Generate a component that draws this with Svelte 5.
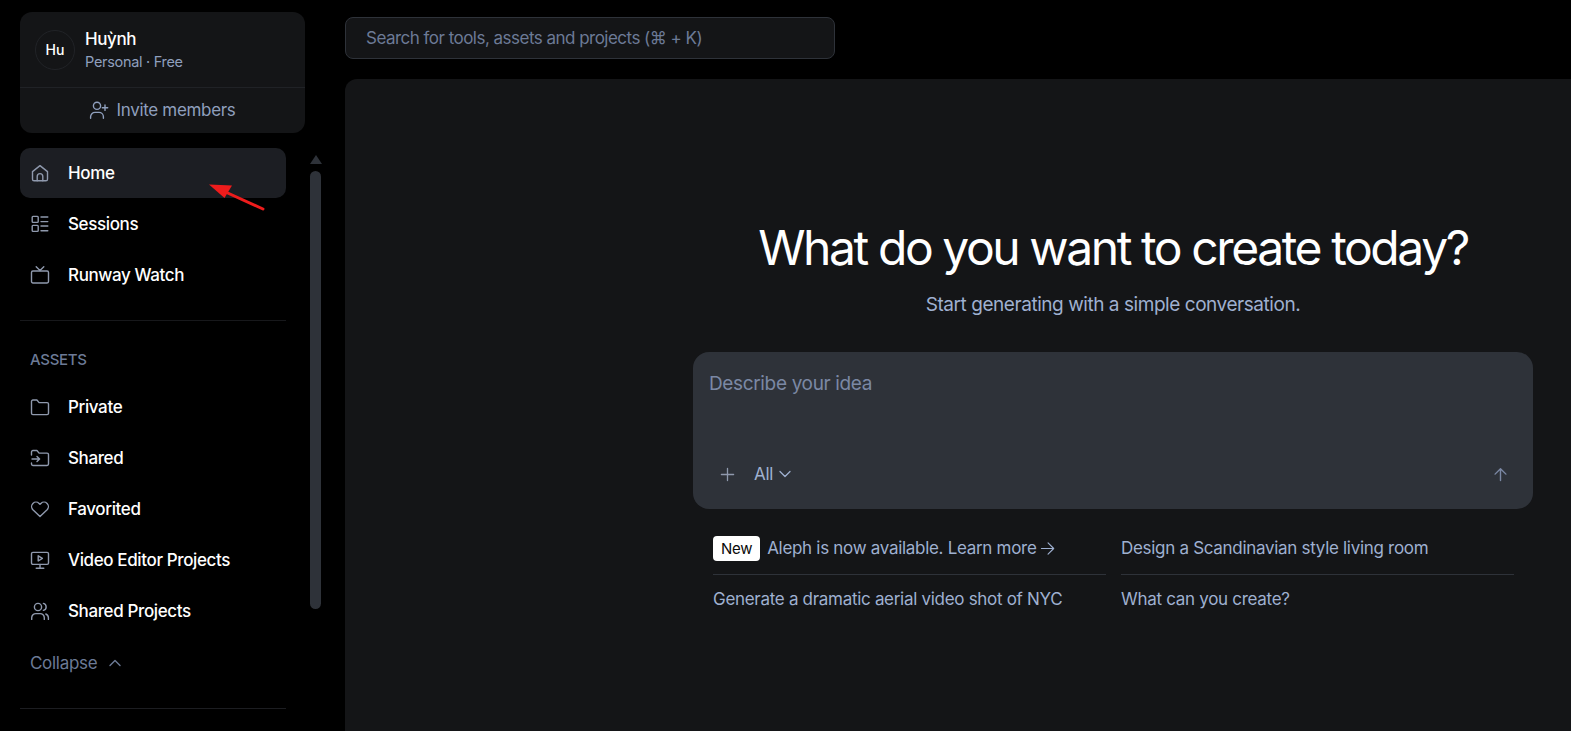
<script>
  const topNav = [
    { label: 'Home', icon: 'home', active: true },
    { label: 'Sessions', icon: 'sessions' },
    { label: 'Runway Watch', icon: 'tv' }
  ];
  const assets = [
    { label: 'Private', icon: 'folder' },
    { label: 'Shared', icon: 'shared' },
    { label: 'Favorited', icon: 'heart' },
    { label: 'Video Editor Projects', icon: 'video' },
    { label: 'Shared Projects', icon: 'users' }
  ];
</script>

{#snippet navIcon(name)}
  <svg class="nav-icon" viewBox="0 0 20 20" fill="none" stroke="currentColor" stroke-width="1.4" stroke-linecap="round" stroke-linejoin="round">
    {#if name === 'home'}
      <path d="M2.500 8.600 10 2.600l7.500 6v7.600a1.600 1.600 0 0 1-1.600 1.600H4.100a1.600 1.600 0 0 1-1.600-1.600z" />
      <path d="M7.200 17.800v-4.400a2.800 2.800 0 0 1 5.600 0v4.400" />
    {:else if name === 'sessions'}
      <rect x="2.200" y="2.400" width="6" height="6" rx="0.8" />
      <rect x="2.200" y="11.400" width="6" height="6" rx="0.8" />
      <path d="M11 3h6.800M11 7.600h6.800M11 12h6.800M11 16.800h6.800" />
    {:else if name === 'tv'}
      <rect x="1.500" y="6" width="17" height="12" rx="1.400" />
      <path d="M6.200 1.800 10 5.600l3.800-3.800" />
    {:else if name === 'folder'}
      <path d="M1.500 4.400a1.400 1.400 0 0 1 1.400-1.400h4l2.200 2.600h8a1.400 1.400 0 0 1 1.400 1.400v9.200a1.400 1.400 0 0 1-1.400 1.400H2.900a1.400 1.400 0 0 1-1.400-1.400z" />
    {:else if name === 'shared'}
      <path d="M1.500 7V3.900a1.400 1.400 0 0 1 1.400-1.400h4l2.200 2.600h8a1.400 1.400 0 0 1 1.400 1.400v9.600a1.400 1.400 0 0 1-1.400 1.400H2.900a1.400 1.400 0 0 1-1.400-1.400V15" />
      <path d="M2 11h7.400M7 8.400l2.600 2.600L7 13.600" />
    {:else if name === 'heart'}
      <path d="M10 17.600 2.900 10.700a4.500 4.500 0 0 1 0-6.300 4.400 4.400 0 0 1 6.200 0l.9.9.9-.9a4.400 4.400 0 0 1 6.200 0 4.500 4.500 0 0 1 0 6.300z" />
    {:else if name === 'video'}
      <rect x="1.500" y="2.400" width="17" height="12" rx="1.400" />
      <path d="M10 14.400v3.600M6.200 18.200h7.600" />
      <path d="M8.200 5.800l4.200 2.600-4.200 2.600z" />
    {:else}
      <circle cx="8" cy="6" r="3.600" />
      <path d="M1.700 18.400v-1.600a4.200 4.200 0 0 1 4.200-4.200h4.200a4.200 4.200 0 0 1 4.200 4.200v1.600" />
      <path d="M13.400 2.400a3.600 3.600 0 0 1 0 7M18.400 18.400v-1.600a4.200 4.200 0 0 0-2.600-3.800" />
    {/if}
  </svg>
{/snippet}

<div class="app">
  <aside class="sidebar">
    <section class="account">
      <div class="account-top">
        <div class="avatar">Hu</div>
        <div class="account-text">
          <div class="account-name">Huỳnh</div>
          <div class="account-plan">Personal · Free</div>
        </div>
      </div>
      <div class="invite">
        <svg class="invite-icon" viewBox="0 0 20 20" fill="none" stroke="currentColor" stroke-width="1.4" stroke-linecap="round" stroke-linejoin="round">
          <circle cx="8" cy="5.800" r="3.600" />
          <path d="M1.600 18.200v-1.400a4.400 4.400 0 0 1 4.400-4.400h4a4.400 4.400 0 0 1 4.400 4.400v1.400" />
          <path d="M16 5v5.400M13.300 7.700h5.400" />
        </svg>
        Invite members
      </div>
    </section>

    <div class="nav-scroll">
      <div class="nav-column">
        <nav class="nav-group">
          {#each topNav as item}
            <div class="nav-item" class:active={item.active}>
              {@render navIcon(item.icon)}
              <span>{item.label}</span>
            </div>
          {/each}
        </nav>
        <hr class="rule rule-first" />
        <div class="section-label">ASSETS</div>
        <nav class="nav-group">
          {#each assets as item}
            <div class="nav-item">
              {@render navIcon(item.icon)}
              <span>{item.label}</span>
            </div>
          {/each}
        </nav>
        <div class="collapse">
          Collapse
          <svg viewBox="0 0 14 14" fill="none" stroke="currentColor" stroke-width="1.400" stroke-linecap="round" stroke-linejoin="round">
            <path d="M2 9.500 7 4.500l5 5" />
          </svg>
        </div>
        <hr class="rule rule-last" />
      </div>
      <div class="scrollbar">
        <div class="scroll-arrow"></div>
        <div class="scroll-thumb"></div>
      </div>
    </div>
  </aside>

  <main class="main">
    <div class="topbar">
      <div class="search">Search for tools, assets and projects (⌘ + K)</div>
    </div>
    <div class="panel">
      <div class="center">
        <h1>What do you want to create today?</h1>
        <p class="subtitle">Start generating with a simple conversation.</p>
        <div class="composer">
          <div class="placeholder">Describe your idea</div>
          <div class="composer-bar">
            <svg class="plus" viewBox="0 0 16 16" fill="none" stroke="currentColor" stroke-width="1.400" stroke-linecap="round">
              <path d="M8 1.500v13M1.500 8h13" />
            </svg>
            <span class="all">All</span>
            <svg class="chev" viewBox="0 0 12 12" fill="none" stroke="currentColor" stroke-width="1.300" stroke-linecap="round" stroke-linejoin="round">
              <path d="M1 3.500 6 8.500l5-5" />
            </svg>
            <svg class="up" viewBox="0 0 16 16" fill="none" stroke="currentColor" stroke-width="1.500" stroke-linecap="round" stroke-linejoin="round">
              <path d="M8 14.500V1.800M2.200 7.600 8 1.800l5.800 5.800" />
            </svg>
          </div>
        </div>
        <div class="suggestions">
          <div class="suggestion with-line">
            <span class="badge">New</span>
            <span>Aleph is now available. Learn more</span>
            <svg class="arrow-right" viewBox="0 0 16 16" fill="none" stroke="currentColor" stroke-width="1.200" stroke-linecap="round" stroke-linejoin="round">
              <path d="M1.500 8h13M8.600 2l6 6-6 6" />
            </svg>
          </div>
          <div class="suggestion with-line">Design a Scandinavian style living room</div>
          <div class="suggestion">Generate a dramatic aerial video shot of NYC</div>
          <div class="suggestion">What can you create?</div>
        </div>
      </div>
    </div>
  </main>

  <!-- annotation drawn over the screenshot -->
  <svg class="annotation" viewBox="0 0 70 40">
    <path d="M56 29 13 9.500" stroke="#ee1c1c" stroke-width="3" stroke-linecap="round" fill="none" />
    <path d="M2 4.500 25 5.500 17.500 18z" fill="#ee1c1c" />
  </svg>
</div>

<style>
  :global(body) {
    margin: 0;
    background: #000;
  }

  .app {
    position: relative;
    display: flex;
    height: 731px;
    overflow: hidden;
    background: #000;
    color: #fff;
    font-family: Inter, "Noto Sans", sans-serif;
  }

  .sidebar {
    flex: 0 0 345px;
    box-sizing: border-box;
    padding: 12px 0 0 20px;
    overflow: hidden;
  }

  .account {
    width: 285px;
    height: 121px;
    box-sizing: border-box;
    background: #141517;
    border-radius: 12px;
  }

  .account-top {
    display: flex;
    align-items: center;
    gap: 10px;
    height: 76px;
    padding-left: 15px;
    box-sizing: border-box;
    border-bottom: 1px solid #202226;
  }

  .avatar {
    width: 40px;
    height: 40px;
    box-sizing: border-box;
    border: 1px solid #212327;
    border-radius: 50%;
    display: flex;
    align-items: center;
    justify-content: center;
    font-size: 14px;
    font-weight: 500;
  }

  .account-name {
    font-size: 17px;
    font-weight: 500;
    line-height: 20px;
    letter-spacing: -0.4px;
  }

  .account-plan {
    margin-top: 4px;
    font-size: 14.5px;
    line-height: 18px;
    color: #8f9fbd;
    letter-spacing: -0.3px;
  }

  .invite {
    display: flex;
    align-items: center;
    justify-content: center;
    gap: 8px;
    height: 44px;
    font-size: 17px;
    color: #8f9fbd;
    letter-spacing: -0.33px;
    padding-right: 1px;
  }

  .invite-icon {
    width: 20px;
    height: 20px;
  }

  .nav-scroll {
    display: flex;
    margin-top: 15px;
  }

  .nav-column {
    width: 266px;
    flex: none;
  }

  .nav-group {
    display: flex;
    flex-direction: column;
    gap: 1px;
  }

  .nav-item {
    display: flex;
    align-items: center;
    gap: 18px;
    height: 50px;
    padding-left: 10px;
    border-radius: 10px;
    font-size: 17px;
    font-weight: 500;
    letter-spacing: -0.38px;
  }

  .nav-item.active {
    background: #1c1e23;
  }

  .nav-icon {
    width: 20px;
    height: 20px;
    color: #8f99ad;
    flex: none;
  }

  .rule {
    margin: 0;
    border: 0;
    height: 1px;
    background: #17181b;
  }

  .rule-first {
    margin-top: 20px;
  }

  .rule-last {
    margin-top: 18px;
    background: #1c1d21;
  }

  .section-label {
    margin: 30px 0 13px 10px;
    font-size: 15px;
    line-height: 18px;
    font-weight: 500;
    color: #6c7a96;
    letter-spacing: -0.3px;
  }

  .collapse {
    display: flex;
    align-items: center;
    gap: 11px;
    height: 54px;
    padding-left: 10px;
    font-size: 17px;
    color: #6c7a96;
    letter-spacing: -0.3px;
  }

  .collapse svg {
    width: 14px;
    height: 14px;
  }

  .scrollbar {
    width: 11px;
    margin-left: 24px;
    display: flex;
    flex-direction: column;
    align-items: center;
  }

  .scroll-arrow {
    margin-top: 7px;
    width: 0;
    height: 0;
    border-left: 6px solid transparent;
    border-right: 6px solid transparent;
    border-bottom: 9px solid #2e3239;
  }

  .scroll-thumb {
    margin-top: 7px;
    width: 11px;
    height: 438px;
    border-radius: 6px;
    background: #2e3239;
  }

  .main {
    flex: 1;
    min-width: 0;
    display: flex;
    flex-direction: column;
  }

  .topbar {
    height: 79px;
    padding-top: 17px;
    box-sizing: border-box;
    flex: none;
  }

  .search {
    width: 490px;
    height: 42px;
    box-sizing: border-box;
    display: flex;
    align-items: center;
    padding-left: 20px;
    background: #141517;
    border: 1px solid #2e3239;
    border-radius: 8px;
    font-size: 17px;
    color: #6c7a96;
    letter-spacing: -0.52px;
  }

  .panel {
    flex: 1;
    background: #141517;
    border-radius: 12px 0 0 0;
    display: flex;
    justify-content: flex-end;
  }

  .center {
    width: 840px;
    margin-right: 38px;
    display: flex;
    flex-direction: column;
    align-items: center;
  }

  h1 {
    margin: 137px 0 0;
    font-size: 48px;
    line-height: 64px;
    font-weight: 400;
    letter-spacing: -2.42px;
    white-space: nowrap;
  }

  .subtitle {
    margin: 13px 0 0;
    font-size: 19px;
    line-height: 24px;
    color: #9fb0d0;
    letter-spacing: -0.45px;
  }

  .composer {
    margin-top: 35px;
    width: 100%;
    height: 157px;
    box-sizing: border-box;
    display: flex;
    flex-direction: column;
    justify-content: space-between;
    padding: 21px 16px 25px;
    background: #2e3239;
    border-radius: 16px;
  }

  .placeholder {
    font-size: 19px;
    line-height: 22px;
    color: #7b88a4;
    letter-spacing: -0.35px;
  }

  .composer-bar {
    display: flex;
    align-items: center;
    height: 20px;
    color: #9fb0d0;
    padding-left: 11px;
  }

  .plus {
    width: 15px;
    height: 15px;
    color: #8f99ad;
  }

  .all {
    margin-left: 19px;
    font-size: 17px;
    letter-spacing: -0.35px;
  }

  .chev {
    width: 12px;
    height: 12px;
    margin-left: 6px;
  }

  .up {
    width: 15px;
    height: 15px;
    margin-left: auto;
    margin-right: 9px;
    color: #7b88a4;
  }

  .suggestions {
    width: 100%;
    box-sizing: border-box;
    padding: 15px 20px 0;
    display: grid;
    grid-template-columns: 393px 393px;
    column-gap: 15px;
  }

  .suggestion {
    display: flex;
    align-items: center;
    height: 50px;
    box-sizing: border-box;
    padding-bottom: 2px;
    font-size: 17px;
    color: #9fb0d0;
    letter-spacing: -0.3px;
  }

  .with-line {
    height: 51px;
    border-bottom: 1px solid #2e3239;
    padding-bottom: 2px;
  }

  .badge {
    background: #fff;
    color: #0a0a0a;
    font-size: 15px;
    padding: 0 8px;
    line-height: 25px;
    border-radius: 4px;
    margin-right: 7px;
  }

  .arrow-right {
    width: 15px;
    height: 15px;
    margin-left: 3px;
  }

  .annotation {
    position: absolute;
    left: 207px;
    top: 180px;
    width: 70px;
    height: 40px;
  }
</style>
